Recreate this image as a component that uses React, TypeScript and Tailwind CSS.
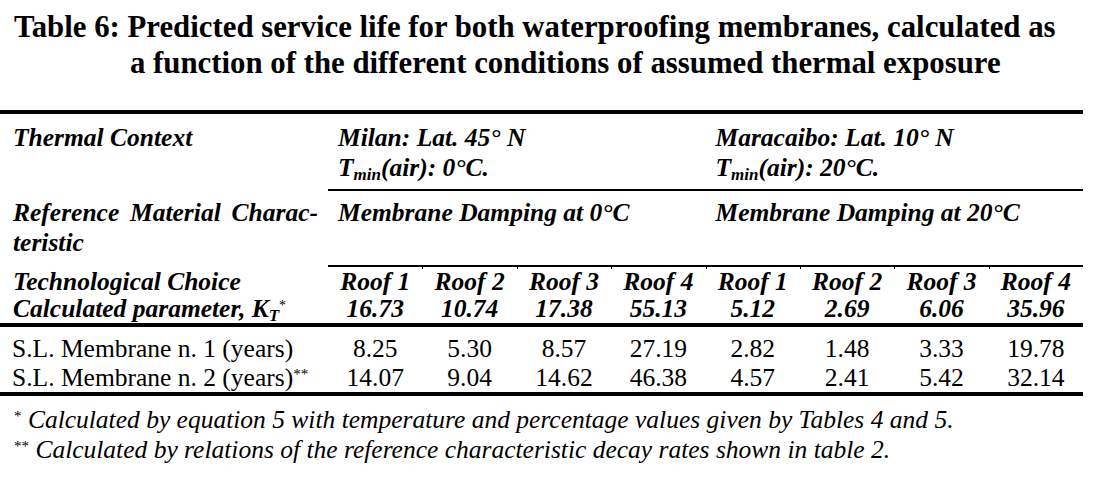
const roofs = [
  { name: "Roof 1", kt: "16.73", m1: "8.25", m2: "14.07" },
  { name: "Roof 2", kt: "10.74", m1: "5.30", m2: "9.04" },
  { name: "Roof 3", kt: "17.38", m1: "8.57", m2: "14.62" },
  { name: "Roof 4", kt: "55.13", m1: "27.19", m2: "46.38" },
  { name: "Roof 1", kt: "5.12", m1: "2.82", m2: "4.57" },
  { name: "Roof 2", kt: "2.69", m1: "1.48", m2: "2.41" },
  { name: "Roof 3", kt: "6.06", m1: "3.33", m2: "5.42" },
  { name: "Roof 4", kt: "35.96", m1: "19.78", m2: "32.14" },
]

const row = "grid grid-cols-[328px_repeat(8,minmax(0,1fr))]"

function Tmin({ temp }: { temp: string }) {
  return (
    <div>
      T<sub className="text-[17px]">min</sub>(air): {temp}
    </div>
  )
}

export default function App() {
  return (
    <div className="min-h-[498px] w-[1100px] bg-white text-black font-['Liberation_Serif',serif]">
      {/* caption */}
      <div className="pt-[9px] text-[30.8px] font-bold leading-[36px]">
        <div className="pl-[14px]">
          Table 6: Predicted service life for both waterproofing membranes, calculated as
        </div>
        <div className="pl-[130px]">a function of the different conditions of assumed thermal exposure</div>
      </div>

      <div className="mt-[29px] w-[1083px] border-t-4 border-black text-[25.5px] leading-[30px]">
        {/* thermal context */}
        <div className={`${row} font-bold italic`}>
          <div className="pl-[13px] pt-[9px]">Thermal Context</div>
          <div className="col-span-4 border-b-2 border-black pl-[10px] pt-[9px] pb-[6px]">
            <div>Milan: Lat. 45° N</div>
            <Tmin temp="0°C." />
          </div>
          <div className="col-span-4 border-b-2 border-black pl-[10px] pt-[9px] pb-[6px]">
            <div>Maracaibo: Lat. 10° N</div>
            <Tmin temp="20°C." />
          </div>
        </div>

        {/* reference material */}
        <div className={`${row} font-bold italic`}>
          <div className="pl-[13px] pr-[10px] pt-[7px] pb-[9px]">
            <div className="flex justify-between">
              <span>Reference</span>
              <span>Material</span>
              <span>Charac-</span>
            </div>
            <div>teristic</div>
          </div>
          <div className="col-span-4 border-b-2 border-black pl-[10px] pt-[7px] pb-[7px]">
            Membrane Damping at 0°C
          </div>
          <div className="col-span-4 border-b-2 border-black pl-[10px] pt-[7px] pb-[7px]">
            Membrane Damping at 20°C
          </div>
        </div>

        {/* technological choice */}
        <div className={`${row} border-b-4 border-black font-bold italic leading-[27px]`}>
          <div className="pl-[13px] pt-[1px] pb-[1px]">
            <div>Technological Choice</div>
            <div>
              Calculated parameter, K<sub className="text-[17px]">T</sub>
              <sup className="text-[14px] font-normal not-italic">*</sup>
            </div>
          </div>
          {roofs.map((r, i) => (
            <div
              key={i}
              className={`relative pt-[1px] text-center ${
                i > 0 ? "before:absolute before:left-0 before:top-0 before:h-[2px] before:w-px before:bg-black" : ""
              }`}
            >
              <div>{r.name}</div>
              <div>{r.kt}</div>
            </div>
          ))}
        </div>

        {/* service life */}
        <div className="border-b-4 border-black pt-[7px] leading-[29px]">
          <div className={row}>
            <div className="pl-[12px]">S.L. Membrane n. 1 (years)</div>
            {roofs.map((r, i) => (
              <div key={i} className="text-center">
                {r.m1}
              </div>
            ))}
          </div>
          <div className={row}>
            <div className="pl-[12px]">
              S.L. Membrane n. 2 (years)<sup className="text-[15px]">**</sup>
            </div>
            {roofs.map((r, i) => (
              <div key={i} className="text-center">
                {r.m2}
              </div>
            ))}
          </div>
        </div>
      </div>

      {/* notes */}
      <div className="pt-[9px] pl-[14px] text-[25.5px] italic leading-[30px]">
        <div>
          <sup className="text-[15px] not-italic">*</sup> Calculated by equation 5 with temperature and percentage
          values given by Tables 4 and 5.
        </div>
        <div>
          <sup className="text-[15px] not-italic">**</sup> Calculated by relations of the reference characteristic
          decay rates shown in table 2.
        </div>
      </div>
    </div>
  )
}
